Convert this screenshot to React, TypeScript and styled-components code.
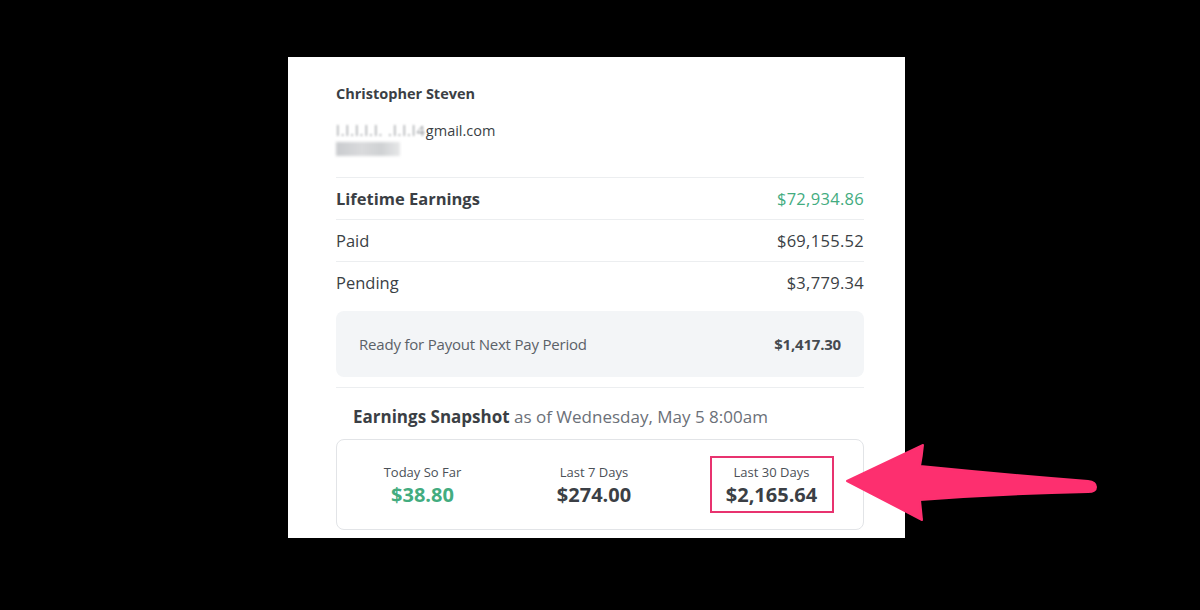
import React from 'react';
import styled, { createGlobalStyle } from 'styled-components';

const GlobalStyle = createGlobalStyle`
    html, body {
        margin: 0;
        padding: 0;
        background: #000;
        font-family: "Open Sans", Lato, Arial, sans-serif;
    }
`;

const Stage = styled.div`
    position: relative;
    width: 1200px;
    height: 610px;
    background: #000;
    padding: 57px 0 0 288px;
    box-sizing: border-box;
`;

const Panel = styled.section`
    width: 617px;
    height: 481px;
    background: #fff;
    box-sizing: border-box;
    padding: 0 41px 0 48px;
    display: flex;
    flex-direction: column;
    color: #3b3f45;
`;

const Profile = styled.div`
    padding-top: 27px;
    height: 121px;
    box-sizing: border-box;
    border-bottom: 1px solid #eceef0;
`;

const Name = styled.div`
    font-size: 14.5px;
    font-weight: 700;
    line-height: 20px;
`;

const Email = styled.div`
    margin-top: 18px;
    font-size: 14.5px;
    line-height: 18px;
`;

const Blurred = styled.span<{ $strength: number }>`
    filter: blur(${p => p.$strength}px);
    color: #9a9da1;
    letter-spacing: 1px;
`;

const Phone = styled.div`
    margin-top: 2px;
    width: 64px;
    height: 14px;
    background: linear-gradient(90deg, #c9cbce 0%, #d9dadc 40%, #cfd1d3 70%, #e6e7e8 100%);
    filter: blur(1.5px);
`;

const Row = styled.div<{ $last?: boolean }>`
    display: flex;
    justify-content: space-between;
    align-items: center;
    height: 41px;
    font-size: 16.5px;
    border-bottom: ${p => (p.$last ? 'none' : '1px solid #eceef0')};
`;

const Label = styled.span<{ $bold?: boolean }>`
    font-weight: ${p => (p.$bold ? 700 : 400)};
`;

const Amount = styled.span<{ $green?: boolean }>`
    color: ${p => (p.$green ? '#43ac7f' : '#3b3f45')};
    letter-spacing: 0.3px;
`;

const PayoutBox = styled.div`
    margin-top: 8px;
    height: 66px;
    border-radius: 8px;
    background: #f3f5f7;
    display: flex;
    justify-content: space-between;
    align-items: center;
    padding: 0 23px;
    font-size: 15px;
    letter-spacing: -0.2px;
    color: #5b6168;
`;

const PayoutValue = styled.span`
    font-weight: 700;
    color: #454a50;
`;

const Divider = styled.div`
    margin-top: 10px;
    height: 1px;
    background: #eceef0;
`;

const SnapshotTitle = styled.div`
    padding: 19px 0 0 17px;
    height: 51px;
    box-sizing: border-box;
    font-size: 17px;
    line-height: 20px;
    color: #6b7078;
`;

const Strong = styled.span`
    font-weight: 700;
    color: #3b3f45;
`;

const Card = styled.div`
    height: 91px;
    border: 1px solid #e2e4e7;
    border-radius: 8px;
    box-sizing: border-box;
    display: grid;
    grid-template-columns: 171px 172px 1fr;
    align-items: center;
`;

const Stat = styled.div<{ $highlight?: boolean }>`
    justify-self: center;
    display: flex;
    flex-direction: column;
    align-items: center;
    box-sizing: border-box;
    padding: 5px 10px 3px;
    border: 2px solid ${p => (p.$highlight ? '#e8336f' : 'transparent')};
    min-width: ${p => (p.$highlight ? '124px' : '0')};
`;

const StatLabel = styled.div`
    font-size: 13px;
    line-height: 18px;
    color: #4b5057;
`;

const StatValue = styled.div<{ $green?: boolean }>`
    font-size: 20px;
    font-weight: 700;
    line-height: 27px;
    color: ${p => (p.$green ? '#43ac7f' : '#3b3f45')};
`;

const ArrowOverlay = styled.svg`
    position: absolute;
    left: 840px;
    top: 440px;
`;

const App: React.FC = () => {
    return (
        <>
            <GlobalStyle />
            <Stage>
                <Panel>
                    <Profile>
                        <Name>Christopher Steven</Name>
                        <Email>
                            <Blurred $strength={0.8}>l.l.l.l.l. .l.l.l4</Blurred>
                            <span>gmail.com</span>
                        </Email>
                        <Phone />
                    </Profile>
                    <Row>
                        <Label $bold>Lifetime Earnings</Label>
                        <Amount $green>$72,934.86</Amount>
                    </Row>
                    <Row>
                        <Label>Paid</Label>
                        <Amount>$69,155.52</Amount>
                    </Row>
                    <Row $last>
                        <Label>Pending</Label>
                        <Amount>$3,779.34</Amount>
                    </Row>
                    <PayoutBox>
                        <span>Ready for Payout Next Pay Period</span>
                        <PayoutValue>$1,417.30</PayoutValue>
                    </PayoutBox>
                    <Divider />
                    <SnapshotTitle>
                        <Strong>Earnings Snapshot</Strong> as of Wednesday, May 5 8:00am
                    </SnapshotTitle>
                    <Card>
                        <Stat>
                            <StatLabel>Today So Far</StatLabel>
                            <StatValue $green>$38.80</StatValue>
                        </Stat>
                        <Stat>
                            <StatLabel>Last 7 Days</StatLabel>
                            <StatValue>$274.00</StatValue>
                        </Stat>
                        <Stat $highlight>
                            <StatLabel>Last 30 Days</StatLabel>
                            <StatValue>$2,165.64</StatValue>
                        </Stat>
                    </Card>
                </Panel>
                {/* annotation arrow */}
                <ArrowOverlay width="260" height="90" viewBox="840 440 260 90">
                    <path
                        d="M847 481 L923 445 Q922 456 920 466 Q1000 474 1088 481 Q1096 482 1096 487 Q1096 492 1088 492 Q1000 494 920 500 Q921 510 922 520 Z"
                        fill="#fd2f6f"
                        strokeLinejoin="round"
                        stroke="#fd2f6f"
                        strokeWidth="2"
                    />
                </ArrowOverlay>
            </Stage>
        </>
    );
};

export default App;
